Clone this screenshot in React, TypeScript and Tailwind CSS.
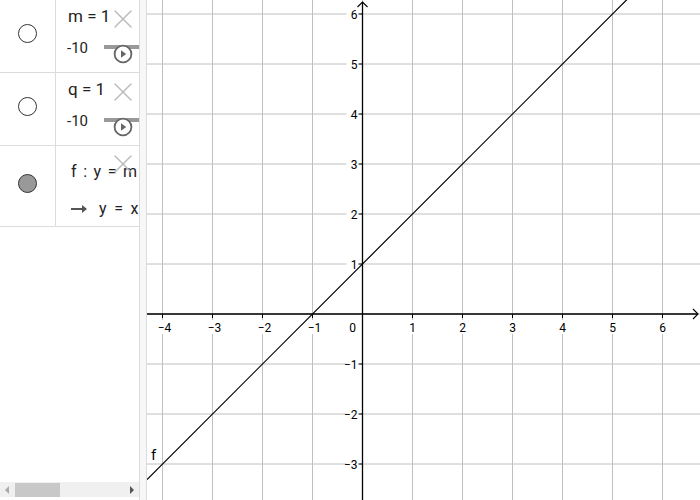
import { X } from "lucide-react";

const font = { fontFamily: "Roboto, 'Noto Sans', sans-serif" };

const OX = 215.5; // origin inside graphics view
const OY = 314;
const U = 50;

function PlayButton() {
  return (
    <svg width="20" height="20" viewBox="0 0 20 20" className="absolute left-[57px] top-[44px]">
      <circle cx="10" cy="10" r="8.4" fill="white" stroke="#666" strokeWidth="1.8" />
      <path d="M8 6.3 L13.2 10 L8 13.7 Z" fill="#666" />
    </svg>
  );
}

function SliderRow({ name }: { name: string }) {
  return (
    <div className="flex h-[73px] border-b border-[#dcdcdc]">
      <div className="w-[56px] shrink-0 border-r border-[#dcdcdc] flex items-center justify-center pb-[6px]">
        <div className="w-[19px] h-[19px] rounded-full border border-[#333] bg-white" />
      </div>
      <div className="relative flex-1 overflow-hidden">
        <div className="absolute left-[12px] top-[4px] text-[17px] text-[#222]">{name} = 1</div>
        <X className="absolute left-[51px] top-[3px] text-[#bbb]" size={32} strokeWidth={1.1} />
        <div className="absolute left-[11px] top-[37px] text-[15px] text-[#222]">-10</div>
        <div className="absolute left-[48px] top-[45px] w-[40px] h-[4px] bg-[#999]" />
        <PlayButton />
      </div>
    </div>
  );
}

function FunctionRow() {
  return (
    <div className="flex h-[81px] border-b border-[#dcdcdc]">
      <div className="w-[56px] shrink-0 border-r border-[#dcdcdc] flex items-center justify-center pb-[5px]">
        <div className="w-[19px] h-[19px] rounded-full border border-[#333] bg-[#999]" />
      </div>
      <div className="relative flex-1 overflow-hidden">
        <div className="absolute left-[15px] top-[14px] text-[16px] tracking-[0.3px] [word-spacing:2px] text-[#222] whitespace-nowrap">
          f : y = m
        </div>
        <X className="absolute left-[51px] top-[2px] text-[#bbb]" size={32} strokeWidth={1.1} />
        <div className="absolute left-[15px] top-[51px] text-[16px] tracking-[0.3px] [word-spacing:3px] text-[#222] whitespace-nowrap flex items-center">
          <span className="inline-block w-[15px] h-[2px] bg-[#555] relative mr-[13px]">
            <span className="absolute right-[-1px] top-[-3px] border-l-[5px] border-l-[#555] border-y-[4px] border-y-transparent" />
          </span>
          y = x
        </div>
      </div>
    </div>
  );
}

function Graphics() {
  const W = 553;
  const H = 500;
  const xs = [-4, -3, -2, -1, 1, 2, 3, 4, 5, 6];
  const ys = [-3, -2, -1, 1, 2, 3, 4, 5, 6];
  const gridX = Array.from({ length: 12 }, (_, i) => i - 5);
  const gridY = Array.from({ length: 12 }, (_, i) => i - 4);
  const x0 = -OX / U;
  const x1 = (W - OX) / U;
  const line = (x: number) => ({ px: OX + x * U, py: OY - (x + 1) * U });
  const a = line(x0);
  const b = line(x1);
  return (
    <svg width={W} height={H} className="block" style={font}>
      <rect width={W} height={H} fill="white" />
      {gridX.map((k) => (
        <line key={`gx${k}`} x1={OX + k * U} y1={0} x2={OX + k * U} y2={H} stroke="#c0c0c0" strokeWidth="1" />
      ))}
      {gridY.map((k) => (
        <line key={`gy${k}`} x1={0} y1={OY - k * U} x2={W} y2={OY - k * U} stroke="#c0c0c0" strokeWidth="1" />
      ))}
      {/* label backgrounds */}
      {xs.map((k) => (
        <rect key={`bx${k}`} x={OX + k * U - 9} y={OY + 6} width={18} height={14} fill="white" />
      ))}
      {ys.map((k) => (
        <rect key={`by${k}`} x={OX - 16} y={OY - k * U - 7} width={13} height={14} fill="white" />
      ))}
      <line x1={0} y1={OY} x2={W - 2} y2={OY} stroke="#000" strokeWidth="1.3" />
      <line x1={OX} y1={H} x2={OX} y2={2} stroke="#000" strokeWidth="1.3" />
      <path d={`M${W - 7} ${OY - 5} L${W - 2} ${OY} L${W - 7} ${OY + 5}`} fill="none" stroke="#000" strokeWidth="1.1" />
      <path d={`M${OX - 5} 7 L${OX} 2 L${OX + 5} 7`} fill="none" stroke="#000" strokeWidth="1.1" />
      {xs.map((k) => (
        <g key={`tx${k}`}>
          <line x1={OX + k * U} y1={OY} x2={OX + k * U} y2={OY + 4} stroke="#000" />
          <text x={OX + k * U + (k < 0 ? 2 : 0)} y={OY + 18} fontSize="12" textAnchor="middle" fill="#000">
            {k < 0 ? `\u2212${-k}` : k}
          </text>
        </g>
      ))}
      <text x={OX - 10} y={OY + 18} fontSize="12" textAnchor="middle" fill="#000">
        0
      </text>
      {ys.map((k) => (
        <g key={`ty${k}`}>
          <line x1={OX - 4} y1={OY - k * U} x2={OX} y2={OY - k * U} stroke="#000" />
          <text x={OX - 5} y={OY - k * U + 4.5} fontSize="12" textAnchor="end" fill="#000">
            {k < 0 ? `\u2212${-k}` : k}
          </text>
        </g>
      ))}
      <line x1={a.px} y1={a.py} x2={b.px} y2={b.py} stroke="#000" strokeWidth="1.2" />
      <text x={4} y={460} fontSize="15" fill="#000">
        f
      </text>
    </svg>
  );
}

export default function App() {
  return (
    <div className="flex w-[700px] h-[500px] overflow-hidden bg-white" style={font}>
      <div className="relative w-[140px] shrink-0 border-r border-[#dcdcdc] flex flex-col">
        <SliderRow name="m" />
        <SliderRow name="q" />
        <FunctionRow />
        <div className="flex-1" />
        <div className="h-[15px] mb-[3px] bg-[#f0f0f0] flex items-center relative">
          <span className="absolute left-[5px] border-r-[4px] border-r-[#aaa] border-y-[4px] border-y-transparent" />
          <div className="absolute left-[15px] w-[45px] h-[14px] bg-[#c8c8c8]" />
          <span className="absolute left-[130px] border-l-[4px] border-l-[#555] border-y-[4px] border-y-transparent" />
        </div>
      </div>
      <div className="w-[7px] shrink-0 bg-[#f7f7f7] border-r border-[#dcdcdc]" />
      <Graphics />
    </div>
  );
}
